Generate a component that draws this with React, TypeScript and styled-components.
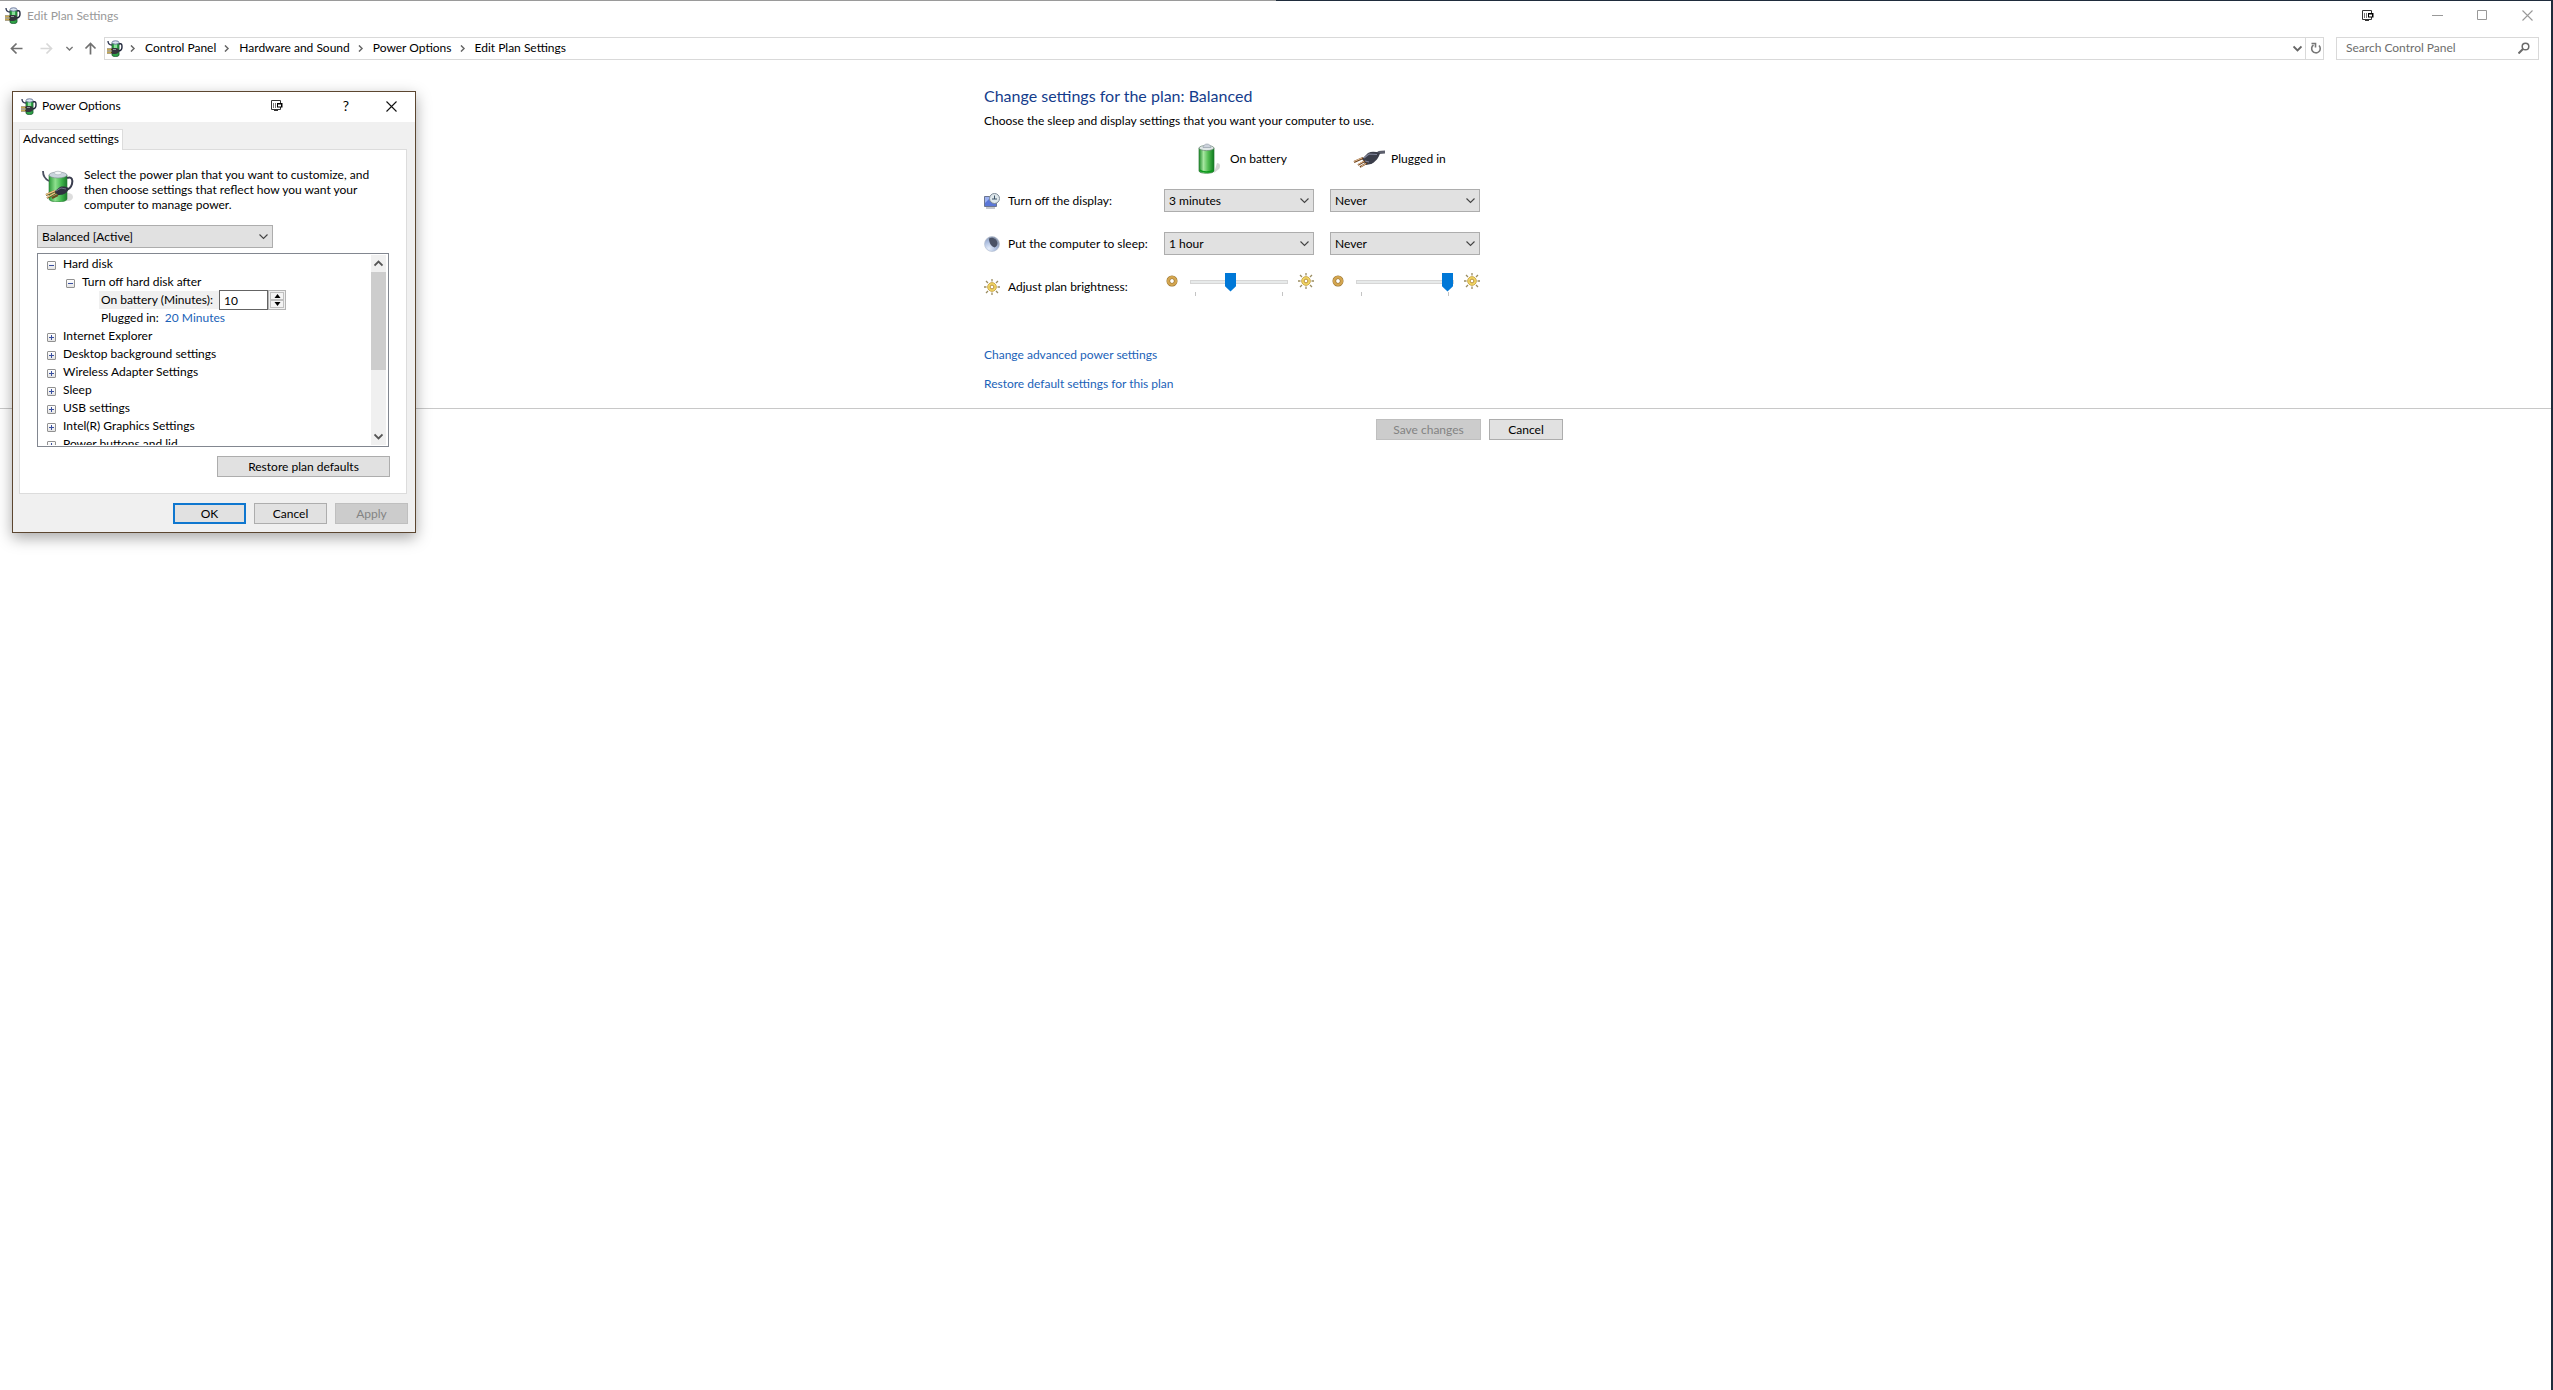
import React, { useState } from "react";
import styled, { createGlobalStyle } from "styled-components";

const GlobalStyle = createGlobalStyle`
  *, *::before, *::after { box-sizing: border-box; }
  body { margin: 0; background: #fff; }
  body, button, input, select {
    font-family: Lato, "Open Sans", "Liberation Sans", sans-serif;
    font-size: 12px;
    line-height: 16px;
    color: #000;
  }
  svg { display: block; flex: none; }
`;

/* ---------- Icons ---------- */

const PowerPlanIcon = ({ size = 16 }: { size?: number }) => (
  <svg width={size} height={size} viewBox="0 0 32 32" aria-hidden="true">
    <defs>
      <linearGradient id="planBody" x1="0" x2="1">
        <stop offset="0" stopColor="#2c9a3a" />
        <stop offset="0.35" stopColor="#8fe08f" />
        <stop offset="0.7" stopColor="#3fb54c" />
        <stop offset="1" stopColor="#1c7a2c" />
      </linearGradient>
    </defs>
    <ellipse cx="26" cy="27" rx="5" ry="4" fill="#bbb" opacity="0.5" />
    <path d="M7 5v24c0 4 18 4 18 0V5z" fill="url(#planBody)" stroke="#2a7d36" strokeWidth="0.6" />
    <ellipse cx="16" cy="5" rx="9" ry="3" fill="#c9d4dc" stroke="#7f8b93" strokeWidth="0.6" />
    <ellipse cx="16" cy="3" rx="3.6" ry="1.8" fill="#f2f6f8" stroke="#9aa5ad" strokeWidth="0.5" />
    <path d="M1 1c0 5 2 8 6 10" fill="none" stroke="#4a5060" strokeWidth="1.8" />
    <path d="M25 8c5-2 6 2 5 6s-4 6-8 7" fill="none" stroke="#3a3d4e" strokeWidth="2" />
    <path d="M12 22l6-5c3-1 7 0 9 1l-2 4c-3 3-7 3-9 3z" fill="#2f3140" />
    <path d="M14 21l5-3 5 1" fill="none" stroke="#71758a" strokeWidth="1" />
    <path d="M4 25l9-4M5 28l9-5M10 28l6-3" stroke="#6b4a20" strokeWidth="2" />
    <path d="M4 24.600l9-4M5 27.600l8-4.500" stroke="#f0c987" strokeWidth="1.2" />
  </svg>
);

const SmallPlanIcon = () => (
  <svg width="17" height="17" viewBox="0 0 17 17" aria-hidden="true">
    <path d="M5 3v12c0 2 7 2 7 0V3z" fill="#2fa447" stroke="#14532a" strokeWidth="0.8" />
    <path d="M7 4h3v6H7z" fill="#8be09a" />
    <ellipse cx="8.500" cy="2.500" rx="3.500" ry="1.700" fill="#dce6f2" stroke="#55648a" strokeWidth="0.8" />
    <path d="M1 1c0 2 1 4 4 4" fill="none" stroke="#2c3550" strokeWidth="1.300" />
    <path d="M12 4c3-1 3 1 3 3s-1 4-4 4" fill="none" stroke="#20263a" strokeWidth="1.400" />
    <path d="M5 8h4c2 0 3 1 3 3s-2 3-4 3H5z" fill="#33363b" />
    <path d="M6 9.500h3" stroke="#8d939b" />
    <path d="M0 9.500h5M0 12.500h5" stroke="#5c4a16" strokeWidth="1.800" />
    <path d="M0 9.500h4M0 12.500h4" stroke="#e0c060" strokeWidth="0.8" />
  </svg>
);

const ScreenIcon = () => (
  <svg width="12" height="12" viewBox="0 0 12 12" aria-hidden="true">
    <path d="M0.500 0.500h9v9h-9z" fill="#fff" stroke="#333" />
    <path d="M2.500 3v5M4.500 3v5" stroke="#777" />
    <path d="M6 3h5.500v4.500H6z" fill="#000" />
    <path d="M7 4.500h3v2H7z" fill="#fff" />
    <path d="M3 10.500h4" stroke="#333" />
  </svg>
);

const CloseIcon = ({ color }: { color: string }) => (
  <svg width="11" height="11" viewBox="0 0 11 11" aria-hidden="true">
    <path d="M0.500 0.500l10 10M10.500 0.500l-10 10" stroke={color} strokeWidth="1.100" />
  </svg>
);

const MinimizeIcon = () => (
  <svg width="11" height="11" viewBox="0 0 11 11" aria-hidden="true">
    <path d="M0 5.500h11" stroke="#999" />
  </svg>
);

const MaximizeIcon = () => (
  <svg width="11" height="11" viewBox="0 0 11 11" aria-hidden="true">
    <path d="M0.500 0.500h9v9h-9z" fill="none" stroke="#999" />
  </svg>
);

const ArrowIcon = ({ color, turn = 0 }: { color: string; turn?: number }) => (
  <svg width="13" height="13" viewBox="0 0 13 13" aria-hidden="true">
    <path
      d="M6.500 1.500l-5 5 5 5M1.500 6.500h11"
      fill="none"
      stroke={color}
      strokeWidth="1.700"
      transform={`rotate(${turn} 6.500 6.500)`}
    />
  </svg>
);

const ChevronIcon = ({
  size = 9,
  color = "#555",
  turn = 0,
  weight = 1.2,
}: {
  size?: number;
  color?: string;
  turn?: number;
  weight?: number;
}) => (
  <svg width={size} height={size} viewBox="0 0 9 9" aria-hidden="true">
    <path
      d="M0.500 2.500l4 4 4-4"
      fill="none"
      stroke={color}
      strokeWidth={weight}
      transform={`rotate(${turn} 4.500 4.500)`}
    />
  </svg>
);

const RefreshIcon = () => (
  <svg width="12" height="12" viewBox="0 0 12 12" aria-hidden="true">
    <path d="M3.500 3a4.300 4.300 0 1 0 5.500 0.500" fill="none" stroke="#777" strokeWidth="1.600" />
    <path d="M1.500 1.500h4v4" fill="none" stroke="#777" strokeWidth="1.600" />
  </svg>
);

const SearchIcon = () => (
  <svg width="12" height="12" viewBox="0 0 12 12" aria-hidden="true">
    <circle cx="7.500" cy="4.500" r="3.300" fill="none" stroke="#6a6a6a" strokeWidth="1.500" />
    <path d="M5 7l-4.500 4.500" stroke="#6a6a6a" strokeWidth="2" />
  </svg>
);

const BatteryIcon = () => (
  <svg width="24" height="32" viewBox="0 0 24 32" aria-hidden="true">
    <defs>
      <linearGradient id="cell" x1="0" x2="1">
        <stop offset="0" stopColor="#1f8a2a" />
        <stop offset="0.3" stopColor="#a6e6a0" />
        <stop offset="0.6" stopColor="#55bf55" />
        <stop offset="1" stopColor="#0d7a1c" />
      </linearGradient>
    </defs>
    <path d="M16 30l5-4c2-3 1-6-2-6z" fill="#999" opacity="0.4" />
    <path d="M1 5v23c0 3 15 3 15 0V5z" fill="url(#cell)" stroke="#2a7a34" strokeWidth="0.7" />
    <ellipse cx="8.500" cy="5" rx="7.500" ry="2.600" fill="#dfe6e6" stroke="#6f8a78" strokeWidth="0.700" />
    <path d="M5 4.500c0-2 2-3.500 4-3.500s4 1.500 4 3.500z" fill="#cdd3dc" stroke="#8d97a3" strokeWidth="0.600" />
    <path d="M2 27c2 2.500 11 2.500 13 0" fill="none" stroke="#0c9a1c" strokeWidth="1.500" />
  </svg>
);

const PlugIcon = () => (
  <svg width="32" height="18" viewBox="0 0 32 18" aria-hidden="true">
    <path d="M22 6c3-4 5-4 10-4" fill="none" stroke="#5c5f6c" strokeWidth="3" />
    <path d="M9 9l6-6c4-2 8-1 12 0-1 5-5 9-9 11l-5 1z" fill="#3a3d49" />
    <path d="M11 8l5-4 8 0.500M12 11l4 1" fill="none" stroke="#81859a" strokeWidth="1.200" />
    <path d="M1 12l9-4M5 15l7-4M7 17l7-4" stroke="#70451f" strokeWidth="2" />
    <path d="M1 11.500l8-3.500M5 14.500l6-3.500M8 16.500l5-3" stroke="#f0c9a0" strokeWidth="0.900" />
  </svg>
);

const DisplayIcon = () => (
  <svg width="16" height="16" viewBox="0 0 16 16" aria-hidden="true">
    <path d="M0.500 3.500h12v10h-12z" fill="#5b77d8" stroke="#6b7690" />
    <path d="M1 10l6-6H1z" fill="#9db2f2" />
    <path d="M2 15h9" stroke="#8b8f9c" />
    <circle cx="10.500" cy="5.500" r="5" fill="#dfe8ec" stroke="#7e8b98" />
    <path d="M10.500 2.500v3.500M8 6h5" stroke="#3c5266" />
  </svg>
);

const MoonIcon = () => (
  <svg width="16" height="16" viewBox="0 0 16 16" aria-hidden="true">
    <defs>
      <radialGradient id="moon" cx="0.3" cy="0.8" r="0.8">
        <stop offset="0" stopColor="#e4edfb" />
        <stop offset="0.6" stopColor="#a9bbdd" />
        <stop offset="1" stopColor="#8a96ad" />
      </radialGradient>
    </defs>
    <circle cx="8" cy="8" r="7.500" fill="url(#moon)" stroke="#b4bece" strokeWidth="0.600" />
    <path d="M5 2.500c4-2 8 1 8.500 4.500 0 2-1 4-3 4.500C8 10.500 5 8 5 2.500z" fill="#4a5266" />
  </svg>
);

const SunIcon = () => (
  <svg width="16" height="16" viewBox="0 0 16 16" aria-hidden="true">
    <path
      d="M8 0v2.500M8 13.500v2.500M0 8h2.500M13.500 8h2.500M2 2l2 2M12 12l2 2M2 14l2-2M12 4l2-2"
      stroke="#9a8c60"
      strokeWidth="1.300"
    />
    <circle cx="8" cy="8" r="4.400" fill="#f2d763" stroke="#c29a3c" strokeWidth="0.800" />
    <circle cx="8" cy="8" r="1.900" fill="#fff" stroke="#b98f3a" strokeWidth="1" />
  </svg>
);

const DimIcon = () => (
  <svg width="12" height="12" viewBox="0 0 12 12" aria-hidden="true">
    <circle cx="6" cy="6" r="3.700" fill="#fff" stroke="#94702f" strokeWidth="3.600" />
    <circle cx="6" cy="6" r="3.800" fill="none" stroke="#d4a650" strokeWidth="2.600" />
  </svg>
);

/* ---------- Shared controls ---------- */

const Button = styled.button<{ $width: number; $primary?: boolean }>`
  width: ${(p) => p.$width}px;
  height: 21px;
  padding: 0;
  border: ${(p) => (p.$primary ? "2px solid #0f77cf" : "1px solid #adadad")};
  background: #e1e1e1;
  text-align: center;
  line-height: 16px;
  &:disabled {
    background: #ccc;
    border-color: #bfbfbf;
    color: #838383;
  }
`;

const IconButton = styled.button`
  display: flex;
  align-items: center;
  justify-content: center;
  padding: 0;
  border: 0;
  background: none;
`;

const SelectFrame = styled.div<{ $width: number }>`
  display: grid;
  grid-template-columns: 1fr 14px;
  align-items: center;
  width: ${(p) => p.$width}px;
  height: 23px;
  > select { grid-area: 1 / 1 / 2 / 3; }
  > svg { grid-area: 1 / 2; pointer-events: none; }
`;

const SelectBox = styled.select`
  appearance: none;
  width: 100%;
  height: 23px;
  padding: 0 20px 0 4px;
  border: 1px solid #adadad;
  border-radius: 0;
  background: #e1e1e1;
`;

function Dropdown({ label, options, width }: { label: string; options: string[]; width: number }) {
  return (
    <SelectFrame $width={width}>
      <SelectBox aria-label={label}>
        {options.map((o) => (
          <option key={o}>{o}</option>
        ))}
      </SelectBox>
      <ChevronIcon color="#444" weight={1.100} />
    </SelectFrame>
  );
}

/* ---------- Main window ---------- */

const Desktop = styled.div`
  position: relative;
  min-height: 100vh;
  padding: 1px 2px 0 0;
  background: linear-gradient(90deg, #9a9a9a 50%, #1f2c3c 50%);
`;

const Window = styled.div`
  display: flex;
  flex-direction: column;
  min-height: calc(100vh - 1px);
  background: #fff;
`;

const TitleBar = styled.header`
  display: flex;
  align-items: center;
  justify-content: space-between;
  height: 29px;
  padding: 0 18px 0 5px;
`;

const TitleText = styled.h1`
  display: flex;
  align-items: center;
  gap: 5px;
  margin: 0;
  font-size: 12px;
  font-weight: 400;
  color: #999;
`;

const WindowButtons = styled.div`
  display: flex;
  align-items: center;
  gap: 34px;
`;

const ScreenSlot = styled(IconButton)`
  margin-right: 24px;
`;

const NavBar = styled.nav`
  display: flex;
  align-items: center;
  height: 36px;
  padding: 0 12px 0 10px;
`;

const NavButtons = styled.div`
  display: flex;
  align-items: center;
  width: 94px;
  > :nth-child(2) { margin-left: 17px; }
  > :nth-child(3) { margin-left: 13px; }
  > :nth-child(4) { margin-left: 11px; }
`;

const AddressBar = styled.div`
  display: flex;
  flex: 1;
  align-items: center;
  height: 23px;
  border: 1px solid #d9d9d9;
  padding-left: 2px;
`;

const Crumbs = styled.ol`
  display: flex;
  flex: 1;
  margin: 0;
  padding: 0;
  list-style: none;
`;

const Crumb = styled.li`
  display: flex;
  align-items: center;
  gap: 9px;
  padding-left: 7px;
  &:first-child { padding-left: 5px; }
  a { color: #000; text-decoration: none; }
`;

const RefreshSlot = styled(IconButton)`
  width: 18px;
  height: 21px;
  margin-left: 3px;
  padding-left: 2px;
  border-left: 1px solid #d9d9d9;
`;

const SearchBox = styled.div`
  display: flex;
  align-items: center;
  justify-content: space-between;
  width: 203px;
  height: 23px;
  margin-left: 12px;
  padding: 0 8px 0 9px;
  border: 1px solid #d9d9d9;
  input {
    flex: 1;
    min-width: 0;
    padding: 0;
    border: 0;
    outline: 0;
    background: none;
  }
  input::placeholder { color: #6d6d6d; opacity: 1; }
`;

const Page = styled.main`
  display: flex;
  flex-direction: column;
  padding-top: 20px;
`;

const Column = styled.section`
  width: 100%;
  max-width: 583px;
  margin: 0 auto;
`;

const Heading = styled.h2`
  margin: 0;
  font-size: 16px;
  line-height: 20px;
  font-weight: 400;
  color: #143c8c;
`;

const Intro = styled.p`
  margin: 7px 0 0;
`;

const SettingsGrid = styled.div`
  display: grid;
  grid-template-columns: 164px 150px 150px;
  grid-template-rows: 40px 43px 43px;
  column-gap: 16px;
  align-items: center;
  margin-top: 10px;
  > :nth-child(3n + 1) { margin-right: -16px; }
`;

const PowerSource = styled.div<{ $gap: number; $inset: number }>`
  display: flex;
  align-items: center;
  gap: ${(p) => p.$gap}px;
  height: 34px;
  padding-left: ${(p) => p.$inset}px;
`;

const RowLabel = styled.div`
  display: flex;
  align-items: center;
  gap: 8px;
`;

const BrightnessRow = styled.div`
  display: grid;
  grid-template-columns: 164px 150px 150px;
  column-gap: 16px;
  align-items: start;
  padding-top: 7px;
`;

const BrightnessLabel = styled(RowLabel)`
  padding-top: 7px;
`;

const SliderGroup = styled.div`
  display: flex;
  align-items: flex-start;
  padding-left: 2px;
  > svg:first-child { margin: 3px 12px 0 0; }
  > svg:last-child { margin: 1px 0 0 10px; }
`;

const Ticked = styled.div`
  width: 98px;
  height: 25px;
  background:
    linear-gradient(#c4c4c4, #c4c4c4) 5px 20px / 1px 4px no-repeat,
    linear-gradient(#c4c4c4, #c4c4c4) 92px 20px / 1px 4px no-repeat;
`;

const Range = styled.input`
  appearance: none;
  display: block;
  width: 98px;
  height: 19px;
  margin: 0;
  background: none;
  &::-webkit-slider-runnable-track {
    height: 4px;
    border: 1px solid #d6d6d6;
    background: #e7eaea;
  }
  &::-webkit-slider-thumb {
    appearance: none;
    width: 11px;
    height: 19px;
    margin-top: -8px;
    background: #0078d7;
    clip-path: polygon(0 0, 100% 0, 100% 72%, 50% 100%, 0 72%);
  }
`;

function Brightness({ label, initial }: { label: string; initial: number }) {
  const [value, setValue] = useState(initial);
  return (
    <SliderGroup>
      <DimIcon />
      <Ticked>
        <Range
          type="range"
          min={0}
          max={100}
          aria-label={label}
          value={value}
          onChange={(e) => setValue(Number(e.target.value))}
        />
      </Ticked>
      <SunIcon />
    </SliderGroup>
  );
}

const Links = styled.div`
  display: flex;
  flex-direction: column;
  align-items: flex-start;
  gap: 13px;
  margin-top: 50px;
  padding-bottom: 16px;
`;

const TextLink = styled.a`
  color: #1a62b8;
  text-decoration: none;
`;

const Footer = styled.footer`
  padding-top: 10px;
  border-top: 1px solid #c8c8c8;
`;

const FooterButtons = styled(Column)`
  display: flex;
  justify-content: flex-end;
  gap: 8px;
  padding-right: 4px;
`;

/* ---------- Power Options dialog ---------- */

const Dialog = styled.div`
  position: absolute;
  left: 12px;
  top: 91px;
  width: 404px;
  border: 1px solid #5c4630;
  background: #f0f0f0;
  box-shadow: 0 5px 14px rgba(0, 0, 0, 0.34);
`;

const DialogTitle = styled.header`
  display: flex;
  align-items: center;
  height: 30px;
  padding: 0 18px 2px 8px;
  background: #fff;
  h2 {
    flex: 1;
    margin: 0 0 0 4px;
    font-size: 12px;
    font-weight: 400;
  }
`;

const DialogTools = styled.div`
  display: flex;
  align-items: center;
  > :nth-child(2) { width: 12px; margin-left: 57px; font-size: 14px; }
  > :nth-child(3) { margin-left: 34px; }
`;

const Tabs = styled.div`
  display: flex;
  padding: 7px 6px 0;
`;

const Tab = styled.button`
  width: 104px;
  height: 21px;
  margin-bottom: -1px;
  padding: 0 0 2px;
  border: 1px solid #dcdcdc;
  border-bottom: 0;
  background: #fff;
  z-index: 1;
`;

const TabPanel = styled.div`
  margin: 0 8px 0 6px;
  height: 345px;
  padding: 20px 17px 0 17px;
  border: 1px solid #dcdcdc;
  background: #fff;
`;

const PlanIntro = styled.div`
  display: flex;
  align-items: flex-start;
  gap: 10px;
  padding-left: 5px;
  p { flex: 1; margin: -3px 0 0; line-height: 15px; }
`;

const PlanSelect = styled.div`
  margin-top: 13px;
`;

const TreeFrame = styled.div`
  display: flex;
  width: 352px;
  height: 194px;
  margin-top: 5px;
  padding: 1px;
  border: 1px solid #828790;
`;

const Tree = styled.ul`
  flex: 1;
  margin: 0;
  padding: 0;
  overflow: hidden;
  list-style: none;
`;

const TreeRow = styled.li<{ $level: number }>`
  display: flex;
  align-items: center;
  height: 18px;
  padding-left: ${(p) => [8, 27, 60][p.$level]}px;
`;

const Expander = styled.button`
  display: grid;
  place-items: center;
  width: 9px;
  height: 9px;
  margin: 3px 7px 0 0;
  padding: 0;
  border: 1px solid #919191;
  border-radius: 1px;
  background: linear-gradient(#fff, #e4e4e4);
`;

function TreeToggle({ open, name }: { open?: boolean; name: string }) {
  return (
    <Expander type="button" aria-expanded={!!open} aria-label={name}>
      <svg width="5" height="5" viewBox="0 0 5 5" aria-hidden="true">
        <path d={open ? "M0 2.500h5" : "M0 2.500h5M2.500 0v5"} stroke="#3a50a0" />
      </svg>
    </Expander>
  );
}

const MinutesLabel = styled.label`
  width: 120px;
  height: 18px;
  padding: 1px 0 0 2px;
  background: #f0f0f0;
`;

const MinutesInput = styled.input`
  width: 49px;
  height: 20px;
  padding: 0 4px;
  border: 1px solid #646464;
`;

const Spinner = styled.div`
  display: grid;
  grid-template-rows: 1fr 1fr;
  width: 18px;
  height: 20px;
  padding: 1px;
  border: 1px solid #b4b4b4;
  background: #f0f0f0;
`;

const SpinButton = styled(IconButton)`
  border: 1px solid #c0c0c0;
  background: #f4f4f4;
`;

const PluggedValue = styled.span`
  padding-left: 2px;
  a { padding-left: 3px; }
`;

const ScrollBar = styled.div`
  display: flex;
  flex-direction: column;
  width: 16px;
  padding-right: 1px;
  background: linear-gradient(90deg, #f0f0f0 15px, #fff 15px);
`;

const ScrollArrow = styled(IconButton)`
  height: 17px;
`;

const ScrollThumb = styled.div`
  height: 98px;
  margin-bottom: auto;
  background: #cdcdcd;
`;

const RestoreRow = styled.div`
  display: flex;
  justify-content: flex-end;
  margin: 9px -1px 0 0;
`;

const DialogButtons = styled.footer`
  display: flex;
  justify-content: flex-end;
  gap: 8px;
  padding: 9px 7px 8px 0;
`;

const collapsed = [
  "Internet Explorer",
  "Desktop background settings",
  "Wireless Adapter Settings",
  "Sleep",
  "USB settings",
  "Intel(R) Graphics Settings",
  "Power buttons and lid",
];

function PowerOptions() {
  const [minutes, setMinutes] = useState(10);
  return (
    <Dialog role="dialog" aria-labelledby="power-title">
      <DialogTitle>
        <SmallPlanIcon />
        <h2 id="power-title">Power Options</h2>
        <DialogTools>
          <IconButton type="button" aria-label="Screen"><ScreenIcon /></IconButton>
          <IconButton type="button">?</IconButton>
          <IconButton type="button" aria-label="Close"><CloseIcon color="#111" /></IconButton>
        </DialogTools>
      </DialogTitle>
      <Tabs role="tablist">
        <Tab type="button" role="tab" aria-selected="true">Advanced settings</Tab>
      </Tabs>
      <TabPanel role="tabpanel">
        <PlanIntro>
          <PowerPlanIcon size={32} />
          <p>
            Select the power plan that you want to customize, and<br />
            then choose settings that reflect how you want your<br />
            computer to manage power.
          </p>
        </PlanIntro>
        <PlanSelect>
          <Dropdown label="Power plan" options={["Balanced [Active]"]} width={236} />
        </PlanSelect>
        <TreeFrame>
          <Tree>
            <TreeRow $level={0}><TreeToggle open name="Hard disk" />Hard disk</TreeRow>
            <TreeRow $level={1}><TreeToggle open name="Turn off hard disk after" />Turn off hard disk after</TreeRow>
            <TreeRow $level={2}>
              <MinutesLabel htmlFor="minutes">On battery (Minutes):</MinutesLabel>
              <MinutesInput
                id="minutes"
                type="text"
                value={minutes}
                onChange={(e) => setMinutes(Number(e.target.value) || 0)}
              />
              <Spinner>
                <SpinButton type="button" aria-label="More" onClick={() => setMinutes(minutes + 1)}>
                  <svg width="7" height="4" viewBox="0 0 7 4"><path d="M0.500 4l3-4 3 4z" /></svg>
                </SpinButton>
                <SpinButton type="button" aria-label="Fewer" onClick={() => setMinutes(minutes - 1)}>
                  <svg width="7" height="4" viewBox="0 0 7 4"><path d="M0.500 0l3 4 3-4z" /></svg>
                </SpinButton>
              </Spinner>
            </TreeRow>
            <TreeRow $level={2}>
              <PluggedValue>Plugged in: <TextLink href="#minutes">20 Minutes</TextLink></PluggedValue>
            </TreeRow>
            {collapsed.map((name) => (
              <TreeRow key={name} $level={0}><TreeToggle name={name} />{name}</TreeRow>
            ))}
          </Tree>
          <ScrollBar>
            <ScrollArrow type="button" aria-label="Scroll up"><ChevronIcon turn={180} weight={1.800} /></ScrollArrow>
            <ScrollThumb />
            <ScrollArrow type="button" aria-label="Scroll down"><ChevronIcon weight={1.800} /></ScrollArrow>
          </ScrollBar>
        </TreeFrame>
        <RestoreRow>
          <Button type="button" $width={173}>Restore plan defaults</Button>
        </RestoreRow>
      </TabPanel>
      <DialogButtons>
        <Button type="button" $width={73} $primary>OK</Button>
        <Button type="button" $width={73}>Cancel</Button>
        <Button type="button" $width={73} disabled>Apply</Button>
      </DialogButtons>
    </Dialog>
  );
}

export default function App() {
  return (
    <Desktop>
      <GlobalStyle />
      <Window>
        <TitleBar>
          <TitleText><SmallPlanIcon />Edit Plan Settings</TitleText>
          <WindowButtons>
            <ScreenSlot type="button" aria-label="Screen"><ScreenIcon /></ScreenSlot>
            <IconButton type="button" aria-label="Minimize"><MinimizeIcon /></IconButton>
            <IconButton type="button" aria-label="Maximize"><MaximizeIcon /></IconButton>
            <IconButton type="button" aria-label="Close"><CloseIcon color="#999" /></IconButton>
          </WindowButtons>
        </TitleBar>
        <NavBar>
          <NavButtons>
            <IconButton type="button" aria-label="Back"><ArrowIcon color="#707070" /></IconButton>
            <IconButton type="button" aria-label="Forward"><ArrowIcon color="#d8d8d8" turn={180} /></IconButton>
            <IconButton type="button" aria-label="Recent"><ChevronIcon size={7} color="#777" weight={1.900} /></IconButton>
            <IconButton type="button" aria-label="Up"><ArrowIcon color="#707070" turn={90} /></IconButton>
          </NavButtons>
          <AddressBar>
            <SmallPlanIcon />
            <Crumbs>
              {["Control Panel", "Hardware and Sound", "Power Options", "Edit Plan Settings"].map((c) => (
                <Crumb key={c}>
                  <ChevronIcon size={7} turn={-90} color="#666" weight={1.800} />
                  <a href="#page">{c}</a>
                </Crumb>
              ))}
            </Crumbs>
            <IconButton type="button" aria-label="Previous locations"><ChevronIcon color="#666" weight={1.900} /></IconButton>
            <RefreshSlot type="button" aria-label="Refresh"><RefreshIcon /></RefreshSlot>
          </AddressBar>
          <SearchBox>
            <input type="text" aria-label="Search Control Panel" placeholder="Search Control Panel" />
            <SearchIcon />
          </SearchBox>
        </NavBar>
        <Page id="page">
          <Column>
            <Heading>Change settings for the plan: Balanced</Heading>
            <Intro>Choose the sleep and display settings that you want your computer to use.</Intro>
            <SettingsGrid>
              <span />
              <PowerSource $gap={8} $inset={34}><BatteryIcon />On battery</PowerSource>
              <PowerSource $gap={6} $inset={23}><PlugIcon />Plugged in</PowerSource>
              <RowLabel><DisplayIcon />Turn off the display:</RowLabel>
              <Dropdown label="Turn off the display, on battery" options={["3 minutes", "Never"]} width={150} />
              <Dropdown label="Turn off the display, plugged in" options={["Never", "3 minutes"]} width={150} />
              <RowLabel><MoonIcon />Put the computer to sleep:</RowLabel>
              <Dropdown label="Sleep, on battery" options={["1 hour", "Never"]} width={150} />
              <Dropdown label="Sleep, plugged in" options={["Never", "1 hour"]} width={150} />
            </SettingsGrid>
            <BrightnessRow>
              <BrightnessLabel><SunIcon />Adjust plan brightness:</BrightnessLabel>
              <Brightness label="Brightness on battery" initial={40} />
              <Brightness label="Brightness plugged in" initial={100} />
            </BrightnessRow>
            <Links>
              <TextLink href="#advanced">Change advanced power settings</TextLink>
              <TextLink href="#restore">Restore default settings for this plan</TextLink>
            </Links>
          </Column>
          <Footer>
            <FooterButtons>
              <Button type="button" $width={105} disabled>Save changes</Button>
              <Button type="button" $width={74}>Cancel</Button>
            </FooterButtons>
          </Footer>
        </Page>
      </Window>
      <PowerOptions />
    </Desktop>
  );
}
